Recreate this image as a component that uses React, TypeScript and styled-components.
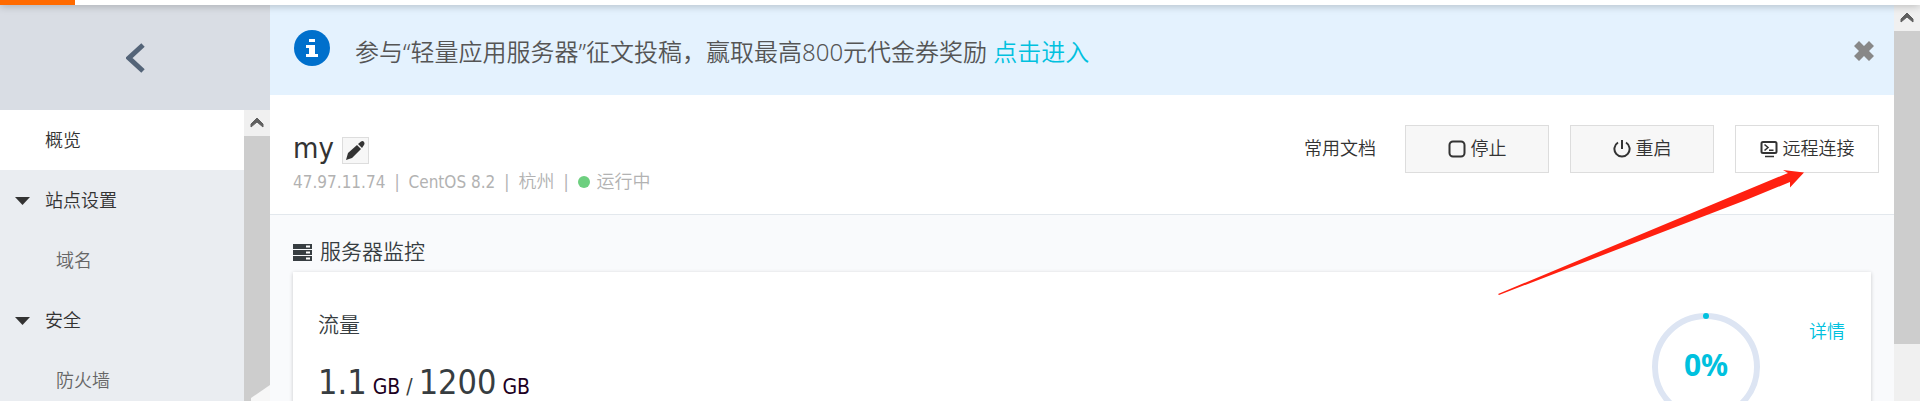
import React from 'react';
import styled, { createGlobalStyle } from 'styled-components';

const GlobalStyle = createGlobalStyle`
  * { box-sizing: border-box; }
  body {
    margin: 0;
    background: #ffffff;
    color: #333333;
    font-family: "DejaVu Sans Condensed", "Noto Sans CJK SC", sans-serif;
    font-size: 18px;
    font-weight: 350;
    line-height: 24px;
  }
  button { font: inherit; color: inherit; cursor: pointer; }
  a { text-decoration: none; }
  svg { display: block; flex: none; }
`;

const Page = styled.div`
  display: flex;
  flex-direction: column;
  height: 100vh;
  overflow: hidden;
`;

const TopBar = styled.header`
  flex: none;
  height: 5px;
  background: #ffffff;
  box-shadow: 0 0 9px rgba(0, 0, 0, 0.35);
  z-index: 2;
`;

const Brand = styled.div`
  width: 75px;
  height: 100%;
  background: #ff6a00;
`;

const Body = styled.div`
  flex: 1;
  display: flex;
  min-height: 0;
`;

const Sidebar = styled.aside`
  flex: none;
  width: 270px;
  display: flex;
  flex-direction: column;
  background: #eaedf1;
`;

const BackButton = styled.button`
  flex: none;
  height: 105px;
  padding: 0;
  border: 0;
  background: #d9dde4;
  display: flex;
  align-items: center;
  justify-content: center;
`;

const MenuArea = styled.div`
  flex: 1;
  display: flex;
  min-height: 0;
  position: relative;
`;

const Menu = styled.nav`
  flex: 1;
  overflow: hidden;
`;

const MenuLink = styled.a<{ $active?: boolean; $child?: boolean }>`
  display: flex;
  align-items: center;
  height: 60px;
  padding: 2px 0 0 ${(p) => (p.$child ? 56 : 45)}px;
  color: ${(p) => (p.$child ? '#666666' : '#333333')};
  background: ${(p) => (p.$active ? '#ffffff' : 'transparent')};
`;

const MenuGroup = styled.button`
  display: flex;
  align-items: center;
  gap: 15px;
  width: 100%;
  height: 60px;
  padding: 2px 0 0 15px;
  border: 0;
  background: transparent;
`;

const ScrollTrack = styled.div`
  flex: none;
  width: 26px;
  display: flex;
  flex-direction: column;
  background: #f0f0f0;
`;

const ScrollUp = styled.div`
  flex: none;
  height: 26px;
  display: flex;
  align-items: center;
  justify-content: center;
`;

const ScrollThumb = styled.div<{ $size: number }>`
  height: ${(p) => p.$size}%;
  background: #cdcdcd;
`;

const CornerFold = styled.svg`
  position: absolute;
  right: 0;
  bottom: 0;
`;

const Main = styled.main`
  flex: 1;
  min-width: 0;
  display: flex;
  flex-direction: column;
  position: relative;
  background: #f9fafc;
`;

const Banner = styled.div`
  flex: none;
  display: flex;
  align-items: flex-start;
  padding: 25px 20px 21px 24px;
  background: #e4f2fe;
  font-family: "Noto Sans", "Noto Sans CJK SC", sans-serif;
  font-size: 24px;
  line-height: 44px;
  color: #555555;
`;

const BannerText = styled.p`
  flex: 1;
  margin: 0 0 0 25px;
`;

const TextLink = styled.a`
  color: #00c1de;
`;

const CloseButton = styled.button`
  padding: 11px 0;
  border: 0;
  background: transparent;
`;

const InstanceHeader = styled.section`
  flex: none;
  display: flex;
  justify-content: space-between;
  align-items: flex-start;
  padding: 30px 15px 20px 23px;
  background: #ffffff;
  border-bottom: 1px solid #e3e8ed;
`;

const TitleRow = styled.div`
  display: flex;
  align-items: center;
  gap: 8px;
  height: 45px;
`;

const Title = styled.h1`
  margin: 0;
  font-size: 29px;
  line-height: 36px;
  font-weight: 400;
`;

const EditButton = styled.button`
  width: 27px;
  height: 27px;
  margin-top: 6px;
  padding: 0;
  border: 1px solid #dddddd;
  background: #f7f7f7;
  display: flex;
  align-items: center;
  justify-content: center;
`;

const Meta = styled.div`
  display: flex;
  align-items: center;
  gap: 9px;
  color: #b2b2b2;
  font-size: 17px;
`;

const Status = styled.span`
  display: flex;
  align-items: center;
  gap: 7px;
  font-size: 18px;
`;

const Region = styled.span`
  font-size: 18px;
`;

const StatusDot = styled.span`
  width: 12px;
  height: 12px;
  border-radius: 50%;
  background: #6dcf7f;
`;

const Actions = styled.div`
  display: flex;
  align-items: center;
  gap: 21px;
`;

const DocsLink = styled.a`
  margin-right: 8px;
  color: #333333;
`;

const ActionButton = styled.button<{ $primary?: boolean }>`
  display: flex;
  align-items: center;
  justify-content: center;
  gap: 5px;
  width: 144px;
  height: 48px;
  padding: 0;
  border: 1px solid #dddddd;
  background: ${(p) => (p.$primary ? '#ffffff' : '#f7f7f7')};
`;

const Monitor = styled.section`
  padding: 24px 23px 0;
  color: #373d41;
`;

const SectionTitle = styled.h2`
  display: flex;
  align-items: center;
  gap: 8px;
  margin: 0 0 6px;
  font-size: 21px;
  line-height: 27px;
  font-weight: 350;
`;

const Card = styled.article`
  display: flex;
  align-items: flex-start;
  min-height: 180px;
  padding: 40px 26px 30px 25px;
  background: #ffffff;
  box-shadow: 0 1px 4px rgba(0, 0, 0, 0.2);
`;

const Traffic = styled.div`
  flex: 1;
`;

const CardTitle = styled.h3`
  margin: 0 0 22px;
  font-size: 21px;
  line-height: 27px;
  font-weight: 350;
`;

const Usage = styled.p`
  margin: 0;
  display: flex;
  align-items: baseline;
  gap: 6px;
  font-size: 21px;
  line-height: 42px;
`;

const Amount = styled.span`
  font-size: 34px;
`;

const Unit = styled.span`
  color: #1c0022;
`;

const Gauge = styled.svg`
  margin-right: 49px;
  margin-top: 1px;
`;

const DetailLink = styled(TextLink)`
  margin-top: 8px;
`;

const Pointer = styled.svg`
  position: absolute;
  top: 164px;
  right: 90px;
  pointer-events: none;
`;

const Scrollbar = ({ size }: { size: number }) => (
  <ScrollTrack aria-hidden="true">
    <ScrollUp>
      <svg width="14" height="12" viewBox="0 0 14 12">
        <path d="M1 10V7l6-6 6 6v3l-6-5z" fill="#606060" stroke="#606060" />
      </svg>
    </ScrollUp>
    <ScrollThumb $size={size} />
  </ScrollTrack>
);

const Caret = () => (
  <svg width="15" height="8" viewBox="0 0 15 8">
    <path d="M0 0h15L7.500 8z" fill="#333333" />
  </svg>
);

export default function App() {
  return (
    <Page>
      <GlobalStyle />
      <TopBar>
        <Brand />
      </TopBar>
      <Body>
        <Sidebar>
          <BackButton aria-label="返回">
            <svg width="19" height="30" viewBox="0 0 19 30">
              <path d="M17 2L3 15l14 13" fill="none" stroke="#546478" strokeWidth="5" />
            </svg>
          </BackButton>
          <MenuArea>
            <Menu>
              <MenuLink href="#overview" $active>概览</MenuLink>
              <MenuGroup><Caret />站点设置</MenuGroup>
              <MenuLink href="#domain" $child>域名</MenuLink>
              <MenuGroup><Caret />安全</MenuGroup>
              <MenuLink href="#firewall" $child>防火墙</MenuLink>
            </Menu>
            <Scrollbar size={100} />
            <CornerFold width="19" height="16" viewBox="0 0 19 16" aria-hidden="true">
              <path d="M19 0v16H0v-3z" fill="#f7f7f7" />
            </CornerFold>
          </MenuArea>
        </Sidebar>
        <Main>
          <Banner>
            <svg width="36" height="36" viewBox="0 0 36 36" aria-hidden="true">
              <circle cx="18" cy="18" r="18" fill="#0070cc" />
              <path d="M15 9h6v3h-6zM12 15h9v9h3v3H12v-3h3v-6h-3z" fill="#ffffff" />
            </svg>
            <BannerText>
              参与“轻量应用服务器”征文投稿，赢取最高800元代金券奖励 <TextLink href="#event">点击进入</TextLink>
            </BannerText>
            <CloseButton aria-label="关闭">
              <svg width="20" height="20" viewBox="0 0 20 20">
                <path d="M5 0l5 5 5-5 5 5-5 5 5 5-5 5-5-5-5 5-5-5 5-5-5-5z" fill="#888888" />
              </svg>
            </CloseButton>
          </Banner>
          <InstanceHeader>
            <div>
              <TitleRow>
                <Title>my</Title>
                <EditButton aria-label="编辑">
                  <svg width="19" height="19" viewBox="0 0 19 19">
                    <path d="M0 19l2-7L11 4l4 4L6 17zM12 3l3-2.500q2-1 3 .5t0 3L16 7z" fill="#333333" />
                  </svg>
                </EditButton>
              </TitleRow>
              <Meta>
                <span>47.97.11.74</span>
                <span>|</span>
                <span>CentOS 8.2</span>
                <span>|</span>
                <Region>杭州</Region>
                <span>|</span>
                <Status><StatusDot />运行中</Status>
              </Meta>
            </div>
            <Actions>
              <DocsLink href="#docs">常用文档</DocsLink>
              <ActionButton>
                <svg width="18" height="18" viewBox="0 0 18 18" fill="none" stroke="#333333" strokeWidth="2">
                  <rect x="1.500" y="1.500" width="15" height="15" rx="3.500" />
                </svg>
                停止
              </ActionButton>
              <ActionButton>
                <svg width="18" height="18" viewBox="0 0 18 18" fill="none" stroke="#333333" strokeWidth="2">
                  <path d="M9 0v9M5 2.500a7.600 7.600 0 1 0 8 0" />
                </svg>
                重启
              </ActionButton>
              <ActionButton $primary>
                <svg width="18" height="18" viewBox="0 0 18 18" fill="none" stroke="#333333" strokeWidth="2">
                  <rect x="1.500" y="2" width="15" height="11" rx="1.500" />
                  <path d="M4.500 4.500L8 7.500l-3.500 3M9 10.200h4.500M5 16.500h9" strokeWidth="1.600" />
                </svg>
                远程连接
              </ActionButton>
            </Actions>
          </InstanceHeader>
          <Monitor>
            <SectionTitle>
              <svg width="19" height="17" viewBox="0 0 19 17" aria-hidden="true">
                <path d="M0 0h19v5H0zM0 6h19v5H0zM0 12h19v5H0z" fill="#373d41" />
                <path d="M13 1.500h4v2h-4zM13 7.500h4v2h-4zM13 13.500h4v2h-4z" fill="#ffffff" />
              </svg>
              服务器监控
            </SectionTitle>
            <Card>
              <Traffic>
                <CardTitle>流量</CardTitle>
                <Usage>
                  <Amount>1.1</Amount>
                  <Unit>GB</Unit>
                  <span>/</span>
                  <Amount>1200</Amount>
                  <Unit>GB</Unit>
                </Usage>
              </Traffic>
              <Gauge width="108" height="108" viewBox="0 0 108 108">
                <circle cx="54" cy="54" r="51" fill="none" stroke="#dde5f3" strokeWidth="6" />
                <circle cx="54" cy="3" r="3" fill="#00c1de" />
                <text
                  x="54"
                  y="63"
                  textAnchor="middle"
                  fontFamily="'Noto Sans', sans-serif"
                  fontWeight="700"
                  fontSize="30"
                  fill="#00c1de"
                >
                  0%
                </text>
              </Gauge>
              <DetailLink href="#detail">详情</DetailLink>
            </Card>
          </Monitor>
          <Pointer width="306" height="126" viewBox="0 0 306 126" aria-hidden="true">
            <path d="M0 125L225 31 290 4 285 1 306 3.500 292 18.500V13L248 31 1 126z" fill="#ff2010" />
          </Pointer>
        </Main>
        <Scrollbar size={79} />
      </Body>
    </Page>
  );
}
